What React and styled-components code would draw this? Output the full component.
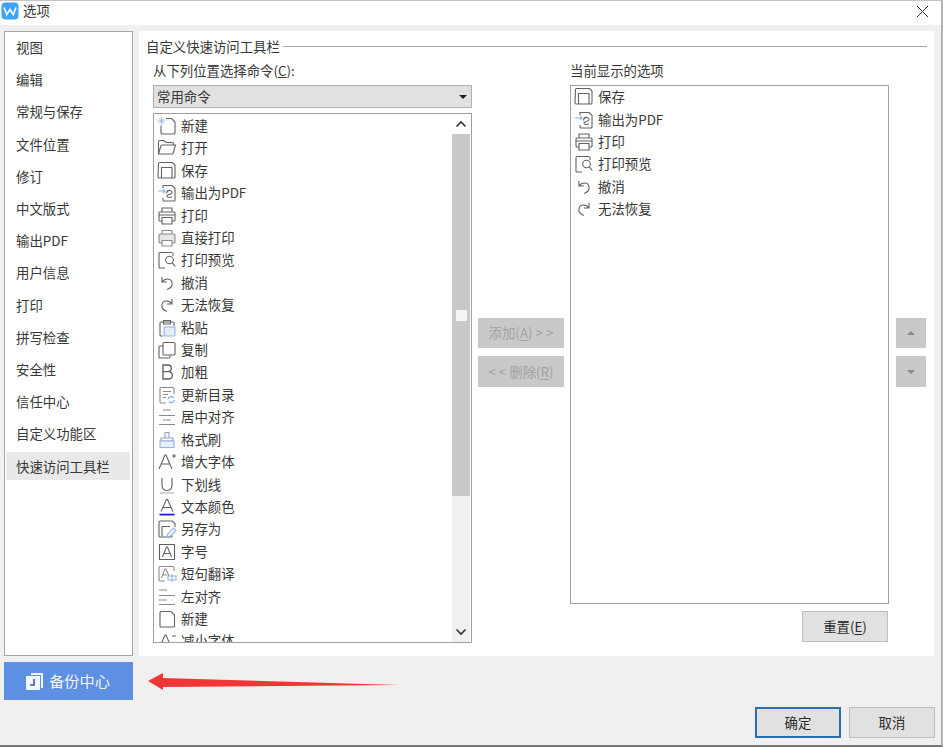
import React from 'react'
import styled, { createGlobalStyle } from 'styled-components'

const GlobalStyle = createGlobalStyle`
  html, body {
    margin: 0;
    padding: 0;
    background: #f0f0f0;
  }
  * {
    box-sizing: border-box;
  }
`

const Window = styled.div`
  position: relative;
  width: 943px;
  height: 747px;
  overflow: hidden;
  background: #f0f0f0;
  border-top: 1px solid #c4c4c4;
  border-right: 2px solid #b4b4b4;
  border-bottom: 2px solid #777;
  font-family: 'Noto Sans CJK SC', 'Noto Sans', sans-serif;
  font-size: 13.4px;
  color: #383838;
`
const TitleBar = styled.div`
  display: flex;
  align-items: center;
  height: 24px;
  padding: 0 12px 4px 1px;
  background: #fff;
`
const TitleText = styled.span`
  margin: 0 0 2px 4px;
  flex: 1;
`
const Main = styled.div`
  display: flex;
  gap: 6px;
  height: 625px;
  margin-top: 6px;
  padding-left: 4px;
`
const Sidebar = styled.div`
  width: 129px;
  padding: 0 2px 0 1px;
  background: #fff;
  border: 1px solid #a6a6a6;
`
const NavItem = styled.div`
  display: flex;
  align-items: center;
  height: 32.2px;
  padding: 0 0 2px 10px;
  background: ${p => (p.$active ? 'linear-gradient(#fff 2px, #e9e9e9 2px, #e9e9e9 30px, #fff 30px)' : 'transparent')};
`
const Panel = styled.div`
  width: 795px;
  padding: 8px 7px 0;
  background: #fff;
`
const GroupHeader = styled.div`
  display: flex;
  align-items: center;
  gap: 3px;
  height: 16px;
  padding-bottom: 2px;
  white-space: nowrap;
`
const GroupLine = styled.div`
  flex: 1;
  height: 1px;
  background: #a8a8a8;
`
const Columns = styled.div`
  display: flex;
  margin-top: 8px;
  padding-left: 7px;
`
const Column = styled.div`
  display: flex;
  flex-direction: column;
  width: 319px;
`
const FieldLabel = styled.div`
  height: 16px;
  line-height: 14px;
  white-space: nowrap;
`
const Select = styled.div`
  display: flex;
  align-items: center;
  justify-content: space-between;
  height: 23px;
  margin-top: 6px;
  padding: 0 4px 2px 3px;
  background: #e1e1e1;
  border: 1px solid #b0b0b0;
`
const Caret = styled.span`
  width: 0;
  height: 0;
  margin-top: 2px;
  border-left: 4px solid transparent;
  border-right: 4px solid transparent;
  border-top: 4px solid #222;
`
const ListBox = styled.div`
  display: flex;
  height: ${p => p.$height}px;
  margin-top: ${p => p.$top}px;
  background: #fff;
  border: 1px solid #a0a0a0;
  overflow: hidden;
`
const Rows = styled.div`
  flex: 1;
  padding-top: ${p => (p.$offset ? '0.8px' : '0')};
  overflow: hidden;
`
const Row = styled.div`
  display: flex;
  align-items: center;
  height: 22.42px;
  padding-left: 3px;
  white-space: nowrap;
`
const RowLabel = styled.span`
  margin-bottom: 2px;
`
const RowIcon = styled.svg`
  flex: none;
  width: 20px;
  height: 20px;
  margin-right: 4px;
  fill: none;
  stroke: #626262;
  stroke-width: 1.1;
`
const ScrollBar = styled.div`
  display: flex;
  flex-direction: column;
  flex: none;
  width: 18px;
  margin-right: 1px;
  background: #f0f0f0;
`
const ScrollEnd = styled.div`
  display: flex;
  align-items: center;
  justify-content: center;
  flex: none;
  height: 20px;
  background: ${p => (p.$top ? '#fff' : '#f0f0f0')};
`
const ScrollThumb = styled.div`
  display: flex;
  align-items: center;
  justify-content: center;
  flex: none;
  height: 362px;
  background: #c8c8c8;
`
const ThumbGrip = styled.div`
  width: 11px;
  height: 11px;
  background: #f4f4f4;
`
const ScrollTrack = styled.div`
  flex: 1;
`
const MoveColumn = styled.div`
  display: flex;
  flex-direction: column;
  gap: 8px;
  flex: none;
  width: ${p => p.$width}px;
  margin: 0 ${p => p.$right}px 0 ${p => p.$left}px;
  padding-top: 255px;
`
const DisabledButton = styled.div`
  display: flex;
  align-items: center;
  justify-content: center;
  height: ${p => p.$height}px;
  padding-bottom: 2px;
  background: #c9c9c9;
  color: #a2a2a2;
  white-space: nowrap;
  u {
    text-underline-offset: 2px;
  }
`
const SmallArrow = styled.span`
  width: 0;
  height: 0;
  margin-top: 2px;
  border-left: 4px solid transparent;
  border-right: 4px solid transparent;
  ${p => (p.$up ? 'border-bottom: 4px solid #8a8a8a;' : 'border-top: 4px solid #8a8a8a;')}
`
const ResetRow = styled.div`
  display: flex;
  justify-content: flex-end;
  margin: 7px 1px 0 0;
`
const PushButton = styled.div`
  display: flex;
  align-items: center;
  justify-content: center;
  width: 86px;
  height: ${p => p.$height}px;
  padding-bottom: 2px;
  background: #e1e1e1;
  border: ${p => (p.$primary ? '2px solid #2a70ad' : '1px solid #bdbdbd')};
  color: #2a2a2a;
  u {
    text-underline-offset: 2px;
  }
`
const Footer = styled.div`
  display: flex;
  justify-content: space-between;
  height: 76px;
  margin-top: 6px;
  padding: 0 6px 0 4px;
`
const BackupButton = styled.div`
  display: flex;
  align-items: center;
  justify-content: center;
  gap: 5px;
  width: 129px;
  height: 38px;
  padding-right: 2px;
  background: #5d8fe2;
  color: #f2f6fd;
  font-size: 15.2px;
`
const BackupLabel = styled.span`
  margin-bottom: 2px;
`
const Actions = styled.div`
  display: flex;
  align-items: flex-end;
  gap: 8px;
`
const Annotation = styled.svg`
  position: absolute;
  left: 144px;
  top: 667px;
  width: 260px;
  height: 26px;
`

const BLUE = '#8db4e4'

const glyphs = {
  newStar: (
    <>
      <path d="M9 2.5h5.5l3.5 3.5v11a1 1 0 0 1-1 1H5a1 1 0 0 1-1-1V9.5" />
      <path d="M4.5 1v8M.5 5h8M1.7 2.2l5.6 5.6M7.3 2.2 1.7 7.8" stroke={BLUE} strokeWidth=".8" />
    </>
  ),
  open: <path d="M1.5 16V3.5a1 1 0 0 1 1-1h4.5l2 2h6.5a1 1 0 0 1 1 1V7M1.5 16l2.5-8.3a1 1 0 0 1 1-.7H18.5l-2.3 8.2a1 1 0 0 1-1 .8z" />,
  save: (
    <>
      <path d="M1.5 2.5a1 1 0 0 1 1-1h13l2.5 2.5V16a1 1 0 0 1-1 1h-15a1 1 0 0 1-1-1z" />
      <path d="M4.5 17V6.5h10.500V17" />
    </>
  ),
  pdf: (
    <>
      <path d="M6 5V2.500h9l3 3V17a1 1 0 0 1-1 1H7a1 1 0 0 1-1-1v-2" />
      <path d="M9.500 10.500c0-4 5.500-4 5.500-1 0 2.500-5.500 1.500-5 4 .3 1.500 3.500 1 5 .3" />
      <path d="M1 8h7M6 6l2 2-2 2" stroke={BLUE} />
    </>
  ),
  print: (
    <>
      <path d="M5 6V2h10v4M5 15H3a1 1 0 0 1-1-1V7a1 1 0 0 1 1-1h14a1 1 0 0 1 1 1v7a1 1 0 0 1-1 1h-2" />
      <path d="M5 11.500h10V18H5zM2 9h16" />
    </>
  ),
  directPrint: (
    <>
      <path d="M5 6V2.500h10V6" stroke="#8b8b8b" />
      <path d="M3 6h14a1 1 0 0 1 1 1v7a1 1 0 0 1-1 1H3a1 1 0 0 1-1-1V7a1 1 0 0 1 1-1z" fill="#e6e6e6" stroke="#8b8b8b" />
      <path d="M5 12.500h10V18H5z" fill="#fff" stroke="#8b8b8b" />
    </>
  ),
  preview: (
    <>
      <path d="M15 2.500H3a1 1 0 0 0-1 1V17a1 1 0 0 0 1 1h5" />
      <circle cx="12.500" cy="10" r="3.800" />
      <path d="m15.300 12.800 3 3.700M16 2.500V6" />
    </>
  ),
  undo: <path d="M5 4v5h5M5 9c3-4 9-4 10 .5.700 3.500-2 6-5 7" />,
  redo: <path d="M15 4v5h-5M15 9c-3-4-9-4-10 .5-.7 3.500 2 6 5 7" />,
  paste: (
    <>
      <path d="M3 17V5a1 1 0 0 1 1-1h12a1 1 0 0 1 1 1v3M3 17a1 1 0 0 0 1 1h2" />
      <path d="M6.500 2.500h7V6h-7z" />
      <path d="M7 9h11v8a1 1 0 0 1-1 1H8a1 1 0 0 1-1-1z" fill="#e3edf9" stroke={BLUE} />
    </>
  ),
  copy: (
    <>
      <path d="M7 2.500h10a1 1 0 0 1 1 1V14a1 1 0 0 1-1 1H7a1 1 0 0 1-1-1V3.500a1 1 0 0 1 1-1z" />
      <path d="M6 6H3a1 1 0 0 0-1 1v10a1 1 0 0 0 1 1h9a1 1 0 0 0 1-1v-2" />
    </>
  ),
  bold: <path d="M6 3h5a3.200 3.200 0 0 1 0 6.600H6zM6 9.600h5.700a3.600 3.600 0 0 1 0 7.400H6z" strokeWidth="1.4" />,
  toc: (
    <>
      <path d="M17 9V3.500a1 1 0 0 0-1-1H4a1 1 0 0 0-1 1V17a1 1 0 0 0 1 1h5" stroke="#8b8b8b" />
      <path d="M6 6.500h8M6 9.500h5M6 12.500h3" stroke="#8b8b8b" />
      <path d="M11 14.500a3.200 3.200 0 0 1 5.700-1.500M17.500 15a3.200 3.200 0 0 1-5.700 1.500" stroke={BLUE} strokeWidth="1.3" />
    </>
  ),
  center: <path d="M6 3h8M2 8.500h16M6 13h8M2 17.500h16" stroke="#8b8b8b" />,
  brush: (
    <>
      <path d="M8 2.500h4v5.500h-4zM4 8h12v3H4z" stroke="#8fa4c0" />
      <path d="M3 11h14v6.500H3z" fill="#e8f0fb" stroke={BLUE} />
    </>
  ),
  grow: <path d="m2 17 6-14h1l6 14M4.500 12h8M15 4h4M17 2v4" />,
  underline: (
    <>
      <path d="M5 3v7.500a5 5 0 0 0 10 0V3" />
      <path d="M3 18h14" stroke="#a9a9c6" />
    </>
  ),
  textColor: (
    <>
      <path d="m4 14.500 5.500-12h1l5.500 12M6 10.500h8" />
      <path d="M2.500 17.600h15" stroke="#1c1ccf" strokeWidth="1.800" />
    </>
  ),
  saveAs: (
    <>
      <path d="M15 16.500v.5a1 1 0 0 1-1 1H3a1 1 0 0 1-1-1V3a1 1 0 0 1 1-1h12l3 2.500V8" />
      <path d="M5 17.500V7.500h8" />
      <path d="m10 18 .6-3 6-6 2.400 2.400-6 6z" stroke={BLUE} />
    </>
  ),
  fontSize: (
    <>
      <path d="M2.500 2.500h15v15h-15z" />
      <path d="m5.500 15 4-10h1l4 10M7 11.500h6" />
    </>
  ),
  translate: (
    <>
      <path d="M17 7V3.500a1 1 0 0 0-1-1H3a1 1 0 0 0-1 1V16a1 1 0 0 0 1 1h5" stroke="#8b8b8b" />
      <path d="m4.500 14 3.500-9h1l3 7M6 11h4" stroke="#8b8b8b" />
      <path d="M11 12h8v4h-8zM15 10v8" stroke={BLUE} />
    </>
  ),
  left: <path d="M2 3h8M2 8.500h16M2 13h8M2 17.500h16" stroke="#8b8b8b" />,
  blank: <path d="M4 2.500h10l3.500 3.500v11a1 1 0 0 1-1 1H4a1 1 0 0 1-1-1V3.500a1 1 0 0 1 1-1z" />,
  shrink: <path d="m2 18 6-14h1l6 14M4.500 13h8M15 5h4" />,
}

const Icon = ({ name }) => (
  <RowIcon viewBox="0 0 20 20">{glyphs[name]}</RowIcon>
)

const navItems = [
  '视图', '编辑', '常规与保存', '文件位置', '修订', '中文版式', '输出PDF',
  '用户信息', '打印', '拼写检查', '安全性', '信任中心', '自定义功能区', '快速访问工具栏',
]

const commands = [
  ['newStar', '新建'], ['open', '打开'], ['save', '保存'], ['pdf', '输出为PDF'],
  ['print', '打印'], ['directPrint', '直接打印'], ['preview', '打印预览'], ['undo', '撤消'],
  ['redo', '无法恢复'], ['paste', '粘贴'], ['copy', '复制'], ['bold', '加粗'],
  ['toc', '更新目录'], ['center', '居中对齐'], ['brush', '格式刷'], ['grow', '增大字体'],
  ['underline', '下划线'], ['textColor', '文本颜色'], ['saveAs', '另存为'], ['fontSize', '字号'],
  ['translate', '短句翻译'], ['left', '左对齐'], ['blank', '新建'], ['shrink', '减小字体'],
]

const current = [
  ['save', '保存'], ['pdf', '输出为PDF'], ['print', '打印'],
  ['preview', '打印预览'], ['undo', '撤消'], ['redo', '无法恢复'],
]

const CommandRows = ({ items }) =>
  items.map(([icon, label], i) => (
    <Row key={i}>
      <Icon name={icon} />
      <RowLabel>{label}</RowLabel>
    </Row>
  ))

const App = () => (
  <Window>
    <GlobalStyle />
    <TitleBar>
      <svg width="18" height="18" viewBox="0 0 18 18">
        <rect x="0.5" y="0.5" width="17" height="17" rx="4" fill="#3ea4f4" />
        <path d="M3 5.500l2.800 7L9 7.500l3.200 5L15 5.500" fill="none" stroke="#fff" strokeWidth="1.600" />
      </svg>
      <TitleText>选项</TitleText>
      <svg width="13" height="13" viewBox="0 0 13 13">
        <path d="M1 1l11 11M12 1 1 12" stroke="#333" strokeWidth="1" />
      </svg>
    </TitleBar>

    <Main>
      <Sidebar>
        {navItems.map((item, i) => (
          <NavItem key={item} $active={i === navItems.length - 1}>{item}</NavItem>
        ))}
      </Sidebar>

      <Panel>
        <GroupHeader>
          自定义快速访问工具栏
          <GroupLine />
        </GroupHeader>
        <Columns>
          <Column>
            <FieldLabel>从下列位置选择命令(<u>C</u>):</FieldLabel>
            <Select>
              常用命令
              <Caret />
            </Select>
            <ListBox $height={530} $top={5}>
              <Rows $offset>
                <CommandRows items={commands} />
              </Rows>
              <ScrollBar>
                <ScrollEnd $top>
                  <svg width="12" height="8" viewBox="0 0 12 8">
                    <path d="M1.500 6.500 6 2l4.500 4.500" fill="none" stroke="#333" strokeWidth="1.600" />
                  </svg>
                </ScrollEnd>
                <ScrollThumb>
                  <ThumbGrip />
                </ScrollThumb>
                <ScrollTrack />
                <ScrollEnd>
                  <svg width="12" height="8" viewBox="0 0 12 8">
                    <path d="M1.500 1.500 6 6l4.500-4.500" fill="none" stroke="#333" strokeWidth="1.600" />
                  </svg>
                </ScrollEnd>
              </ScrollBar>
            </ListBox>
          </Column>

          <MoveColumn $width={86} $left={6} $right={6}>
            <DisabledButton $height={30}>添加(<u>A</u>)&nbsp;&gt; &gt;</DisabledButton>
            <DisabledButton $height={31}>&lt; &lt;&nbsp;删除(<u>R</u>)</DisabledButton>
          </MoveColumn>

          <Column>
            <FieldLabel>当前显示的选项</FieldLabel>
            <ListBox $height={519} $top={6}>
              <Rows>
                <CommandRows items={current} />
              </Rows>
            </ListBox>
            <ResetRow>
              <PushButton $height={31}>重置(<u>E</u>)</PushButton>
            </ResetRow>
          </Column>

          <MoveColumn $width={30} $left={7} $right={0}>
            <DisabledButton $height={30}><SmallArrow $up /></DisabledButton>
            <DisabledButton $height={31}><SmallArrow /></DisabledButton>
          </MoveColumn>
        </Columns>
      </Panel>
    </Main>

    <Footer>
      <BackupButton>
        <svg width="19" height="19" viewBox="0 0 19 19">
          <path d="M6 1h12v15h-2V3H6z" fill="#f2f6fd" />
          <path d="M1 4h14v14H1z" fill="#f2f6fd" />
          <path d="M9 7v6H5" fill="none" stroke="#3d5f9c" strokeWidth="1.600" />
        </svg>
        <BackupLabel>备份中心</BackupLabel>
      </BackupButton>
      <Actions>
        <PushButton $height={31} $primary>确定</PushButton>
        <PushButton $height={31}>取消</PushButton>
      </Actions>
    </Footer>

    <Annotation viewBox="0 0 260 26">
      <path d="M4 13 19 5v5l236 7L19 19v3z" fill="#f03636" />
    </Annotation>
  </Window>
)

export default App
